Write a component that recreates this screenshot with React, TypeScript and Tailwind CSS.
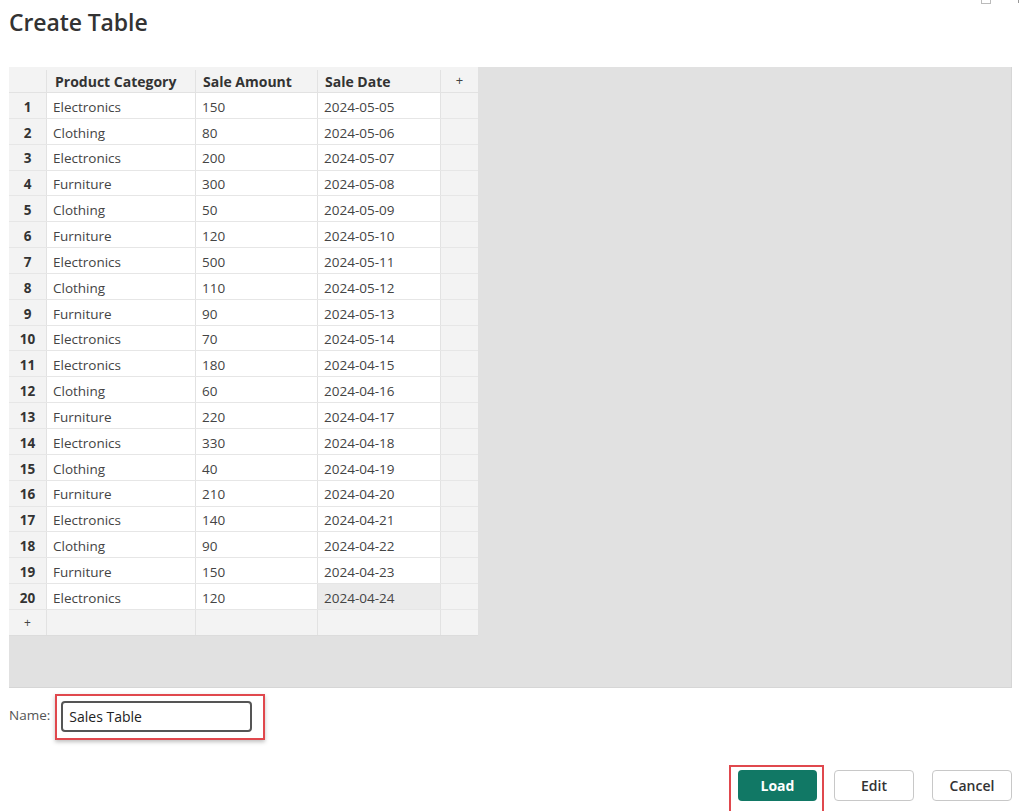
import React from "react";

const rows: [string, string, string][] = [
  ["Electronics", "150", "2024-05-05"],
  ["Clothing", "80", "2024-05-06"],
  ["Electronics", "200", "2024-05-07"],
  ["Furniture", "300", "2024-05-08"],
  ["Clothing", "50", "2024-05-09"],
  ["Furniture", "120", "2024-05-10"],
  ["Electronics", "500", "2024-05-11"],
  ["Clothing", "110", "2024-05-12"],
  ["Furniture", "90", "2024-05-13"],
  ["Electronics", "70", "2024-05-14"],
  ["Electronics", "180", "2024-04-15"],
  ["Clothing", "60", "2024-04-16"],
  ["Furniture", "220", "2024-04-17"],
  ["Electronics", "330", "2024-04-18"],
  ["Clothing", "40", "2024-04-19"],
  ["Furniture", "210", "2024-04-20"],
  ["Electronics", "140", "2024-04-21"],
  ["Clothing", "90", "2024-04-22"],
  ["Furniture", "150", "2024-04-23"],
  ["Electronics", "120", "2024-04-24"],
];

const font = { fontFamily: '"Open Sans", "Noto Sans", sans-serif' };

export default function App() {
  return (
    <div className="relative w-[1024px] h-[811px] bg-white overflow-hidden" style={font}>
      {/* top-right window control remnant */}
      <div className="absolute left-[981px] top-[-6px] w-[10px] h-[10px] border border-[#bbb]" />
      <div className="absolute left-[1018px] top-0 w-[1px] h-[3px] bg-[#999]" />

      <div className="pl-[9px] pt-[5px] h-[67px]">
        <h1 className="text-[23px] font-semibold text-[#333] leading-[34px] tracking-[-0.1px]">Create Table</h1>
      </div>

      <div className="ml-[9px] w-[1003px] h-[621px] bg-[#e1e1e1] border-r border-b border-[#d6d6d6]">
        <div className="flex flex-col w-[469px] text-[13.5px]">
          {/* header */}
          <div className="flex h-[26px] bg-[#f3f3f3] border-b border-[#e2e2e2] pt-[3px]">
            <div className="w-[38px] border-r border-[#e2e2e2]" />
            <div className="w-[149px] border-r border-[#e2e2e2] pl-[8px] flex items-center font-bold text-[14px] text-[#333]">Product Category</div>
            <div className="w-[122px] border-r border-[#e2e2e2] pl-[7px] flex items-center font-bold text-[14px] text-[#333]">Sale Amount</div>
            <div className="w-[123px] border-r border-[#e2e2e2] pl-[7px] flex items-center font-bold text-[14px] text-[#333]">Sale Date</div>
            <div className="w-[37px] flex items-center justify-center text-[#444] text-[13px]">+</div>
          </div>
          {rows.map((r, i) => (
            <div key={i} className="flex h-[25.85px] border-b border-[#e6e6e6]">
              <div className="w-[38px] bg-[#f3f3f3] border-r border-[#e2e2e2] flex items-center justify-center pt-[3px] font-bold text-[#333]">{i + 1}</div>
              <div className="w-[149px] bg-white border-r border-[#e2e2e2] pl-[6px] pt-[3px] flex items-center text-[#444]">{r[0]}</div>
              <div className="w-[122px] bg-white border-r border-[#e2e2e2] pl-[6px] pt-[3px] flex items-center text-[#444]">{r[1]}</div>
              <div className={`w-[123px] border-r border-[#e2e2e2] pl-[6px] pt-[3px] flex items-center text-[#444] ${i === 19 ? "bg-[#ebebeb]" : "bg-white"}`}>{r[2]}</div>
              <div className="w-[37px] bg-[#f3f3f3]" />
            </div>
          ))}
          <div className="flex h-[26px] bg-[#f3f3f3] border-b border-[#dcdcdc]">
            <div className="w-[38px] border-r border-[#e2e2e2] flex items-center justify-center pt-[2px] text-[#444] text-[12px]">+</div>
            <div className="w-[149px] border-r border-[#e2e2e2]" />
            <div className="w-[122px] border-r border-[#e2e2e2]" />
            <div className="w-[123px] border-r border-[#e2e2e2]" />
            <div className="w-[37px]" />
          </div>
        </div>
      </div>

      <div className="flex items-start pl-[9px] mt-[6px]">
        <span className="text-[13.5px] text-[#555] mr-[5px] mt-[11px] leading-[20px]">Name:</span>
        <div className="border-2 border-[#e0484d] shadow-[0_2px_4px_rgba(0,0,0,0.25)] pl-[4px] pr-[11px] pt-[5px] pb-[6px]">
          <div className="w-[191px] h-[31px] border-2 border-[#555] rounded-[4px] flex items-center pl-[6px] text-[14px] text-[#222]">Sales Table</div>
        </div>
      </div>

      <div className="flex justify-end items-start pr-[12px] mt-[25px]">
        <div className="border-2 border-[#e0484d] pl-[7px] pr-[5px] pt-[3px] pb-[12px] mr-[10px]">
          <button className="w-[79px] h-[31px] bg-[#117865] rounded-[4px] text-white font-bold text-[14px]">Load</button>
        </div>
        <div className="flex gap-[18px] pt-[5px]">
          <button className="w-[80px] h-[31px] bg-white border border-[#c8c8c8] rounded-[4px] text-[#333] font-semibold text-[14px]">Edit</button>
          <button className="w-[80px] h-[31px] bg-white border border-[#c8c8c8] rounded-[4px] text-[#333] font-semibold text-[14px]">Cancel</button>
        </div>
      </div>
    </div>
  );
}
